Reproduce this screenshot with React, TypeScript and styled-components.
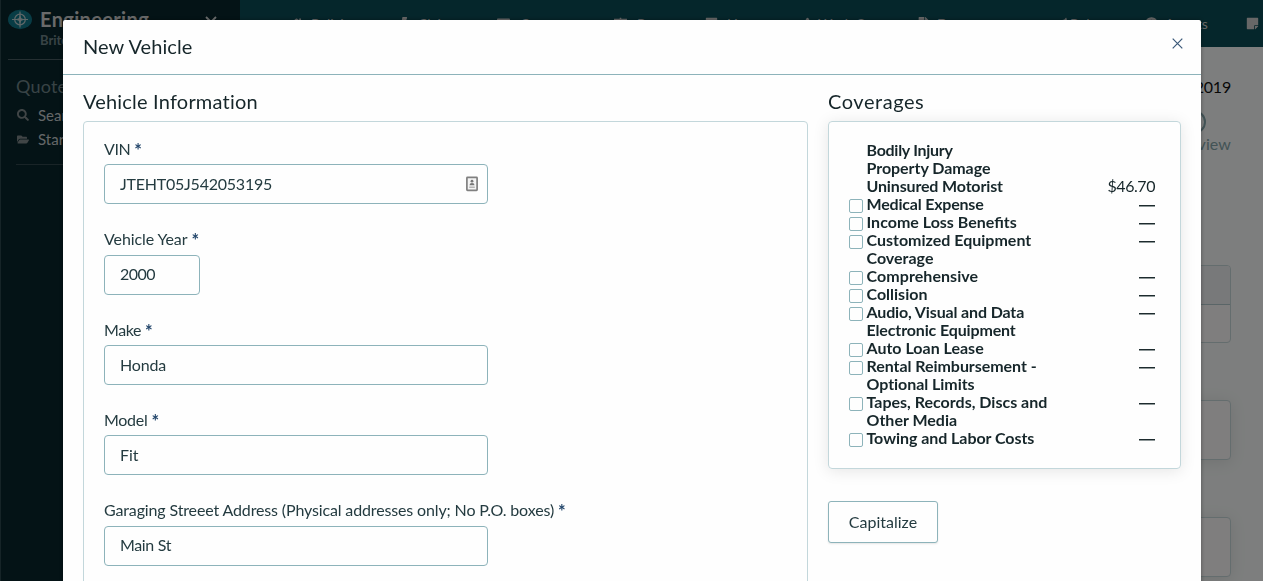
import React from "react";
import styled, { createGlobalStyle } from "styled-components";
import { FaSearch, FaFolderOpen, FaHome, FaBolt, FaAddressCard, FaStickyNote, FaFileAlt, FaLeaf, FaUserCircle, FaExclamationTriangle, FaSlidersH } from "react-icons/fa";

const GlobalStyle = createGlobalStyle`
  * { box-sizing: border-box; }
  html, body { margin: 0; height: 100%; overflow: hidden; }
  body { font-family: Lato, "Open Sans", sans-serif; font-size: 16px; color: #16262a; background: #fafdfc; }
`;

const Page = styled.div`
  display: flex;
  width: 1263px;
  height: 581px;
  overflow: hidden;
`;

const Sidebar = styled.aside`
  flex: 0 0 240px;
  background: #08262c;
  border-left: 1px solid #2c484e;
  color: #d8dcdc;
  padding: 8px 7px;
`;

const Brand = styled.div`
  display: flex;
  height: 52px;
  border-bottom: 1px solid #4a5f64;
`;

const BrandText = styled.div`
  margin: -1px 0 0 8px;
  flex: 1;
`;

const BrandName = styled.div`
  font-size: 20px;
  line-height: 24px;
  letter-spacing: 0.35px;
  font-weight: 700;
  color: #d4d4d4;
`;

const BrandOrg = styled.div`
  font-size: 13px;
  line-height: 19px;
  font-weight: 700;
  color: #71868b;
`;

const MenuArrow = styled.svg`
  margin: 8px 16px 0 0;
`;

const MenuTitle = styled.div`
  margin: 14px 0 0 8px;
  font-size: 18px;
  line-height: 24px;
  letter-spacing: 0.2px;
  color: #71868b;
`;

const MenuItem = styled.div`
  display: flex;
  align-items: center;
  gap: 9px;
  height: 24px;
  padding-left: 1px;
  font-size: 15px;
  color: #c9cfd0;
  svg { color: #808a8c; width: 12px; }
`;

const MenuList = styled.div`
  margin: 5px 0 0 8px;
  padding-bottom: 13px;
  border-bottom: 1px solid #33494e;
`;

const Main = styled.main`
  flex: 1;
  min-width: 0;
`;

const Nav = styled.nav`
  display: flex;
  height: 47px;
  padding-left: 50px;
  background: #0b4c56;
  overflow: hidden;
`;

const NavItem = styled.span<{ $w: number }>`
  display: flex;
  flex: 0 0 ${(p) => p.$w}px;
  align-items: center;
  font-size: 14px;
  color: #cfcfcf;
  white-space: nowrap;
`;

const NavIcon = styled.span<{ $w: number }>`
  display: flex;
  flex: 0 0 ${(p) => p.$w}px;
  svg { width: 13px; height: 13px; }
`;

const Content = styled.div`
  padding: 27px 32px 0 20px;
`;

const PolicyDate = styled.div`
  text-align: right;
  line-height: 26px;
  height: 27px;
  letter-spacing: -0.2px;
  color: #111;
`;

const Step = styled.div`
  display: flex;
  flex-direction: column;
  align-items: flex-end;
  height: 164px;
  padding-top: 9px;
  line-height: 19px;
  letter-spacing: 0.1px;
  color: #86a7ad;
`;

const StepDot = styled.span`
  width: 24px;
  height: 24px;
  margin-right: 25px;
  border: 2px solid #86a7ad;
  border-radius: 50%;
`;

const TableBox = styled.div`
  height: 78px;
  border: 1px solid #c9dadc;
  border-radius: 4px;
  background: #fffdfd;
  overflow: hidden;
`;

const TableHead = styled.div`
  height: 39px;
  background: #f1f2f5;
  border-bottom: 1px solid #b4cbcf;
`;

const Box = styled.div<{ $top: number }>`
  height: 60px;
  margin-top: ${(p) => p.$top}px;
  border: 1px solid #c9dadc;
  border-radius: 4px;
  background: #fffdfd;
  box-shadow: 0 2px 16px rgba(0, 0, 0, 0.1);
`;

const Overlay = styled.div`
  position: fixed;
  inset: 0;
  padding: 20px 62px 0 63px;
  background: rgba(0, 0, 0, 0.5);
`;

const Modal = styled.section`
  height: 640px;
  border-radius: 2px;
  background: #fefefe;
  box-shadow: 0 0 4px rgba(0, 0, 0, 0.35);
`;

const ModalHeader = styled.header`
  display: flex;
  justify-content: space-between;
  height: 55px;
  padding: 15px 18px 0 20px;
  border-bottom: 1px solid #8db3ba;
`;

const Heading = styled.h2<{ $ls: number }>`
  height: 24px;
  margin: 0;
  font-size: 20px;
  line-height: 22px;
  font-weight: 400;
  letter-spacing: ${(p) => p.$ls}px;
  color: #16262a;
`;

const CloseButton = styled.button`
  width: 11px;
  height: 11px;
  margin-top: 3px;
  padding: 0;
  border: 0;
  background: none;
  svg { display: block; }
`;

const ModalBody = styled.div`
  display: flex;
  gap: 20px;
  padding: 15px 20px 0;
`;

const InfoColumn = styled.div`
  width: 725px;
`;

const CoverColumn = styled.div`
  width: 353px;
`;

const FormPanel = styled.div`
  height: 560px;
  margin-top: 7px;
  padding: 17px 20px;
  border: 1px solid #c3d7db;
  border-radius: 4px;
`;

const Field = styled.div`
  height: 90.33px;
`;

const Label = styled.label<{ $ls: number }>`
  display: flex;
  height: 25.4px;
  line-height: 20px;
  letter-spacing: ${(p) => p.$ls}px;
  color: #243b40;
`;

const Star = styled.span`
  margin-left: 4px;
  font-size: 18px;
  line-height: 22px;
  font-weight: 700;
  color: #23466b;
`;

const InputBox = styled.div<{ $w: number }>`
  display: flex;
  align-items: center;
  justify-content: space-between;
  width: ${(p) => p.$w}px;
  height: 40px;
  padding: 0 9px 0 15px;
  border: 1px solid #8db3ba;
  border-radius: 4px;
`;

const Value = styled.span<{ $ls: number }>`
  padding-bottom: 2px;
  letter-spacing: ${(p) => p.$ls}px;
  color: #243b40;
`;

const CoverPanel = styled.div`
  height: 348px;
  margin-top: 7px;
  padding: 19px 25px 0 20px;
  border: 1px solid #c3d7db;
  border-radius: 4px;
  box-shadow: 0 2px 16px rgba(0, 0, 0, 0.1);
`;

const CoverRow = styled.div`
  display: flex;
  line-height: 18px;
`;

const CheckSlot = styled.span`
  flex: 0 0 17.5px;
`;

const Check = styled.span`
  display: block;
  width: 14px;
  height: 14px;
  margin-top: 4px;
  border: 1px solid #8db3ba;
  border-radius: 2px;
`;

const CoverName = styled.span<{ $ls: number }>`
  flex: 1;
  font-weight: 700;
  white-space: pre-line;
  letter-spacing: ${(p) => p.$ls}px;
`;

const Amount = styled.span`
  letter-spacing: -0.45px;
`;

const Dash = styled.span`
  width: 16px;
  height: 2px;
  margin-top: 10px;
  background: linear-gradient(#1d2b2e 50%, #8f9899 50%);
`;

const Button = styled.button`
  width: 110px;
  height: 42px;
  margin-top: 32px;
  padding: 0 0 2px;
  border: 1px solid #8db3ba;
  border-radius: 3px;
  background: #fefefe;
  box-shadow: 0 1px 2px rgba(0, 0, 0, 0.1);
  font: inherit;
  color: #243b40;
`;

const NAV = [
  { Icon: FaHome, text: "Policies", iw: 21, w: 109 },
  { Icon: FaBolt, text: "Claims", iw: 19, w: 98 },
  { Icon: FaAddressCard, text: "Contacts", iw: 23, w: 117 },
  { Icon: FaSlidersH, text: "Rates", iw: 23, w: 91 },
  { Icon: FaStickyNote, text: "Lists", iw: 22, w: 96 },
  { Icon: FaExclamationTriangle, text: "Work Queue", iw: 17, w: 116 },
  { Icon: FaFileAlt, text: "Documents", iw: 20, w: 137 },
  { Icon: FaLeaf, text: "Rules", iw: 16, w: 91 },
  { Icon: FaUserCircle, text: "Agents", iw: 20, w: 101 },
  { Icon: FaStickyNote, text: "", iw: 15, w: 15 },
];

const FIELDS = [
  { label: "VIN", value: "JTEHT05J542053195", w: 384, ls: -0.4, vls: -0.23, badge: true },
  { label: "Vehicle Year", value: "2000", w: 96, ls: -0.1, vls: -0.5 },
  { label: "Make", value: "Honda", w: 384, ls: -0.4, vls: -0.15 },
  { label: "Model", value: "Fit", w: 384, ls: -0.3, vls: -0.05 },
  { label: "Garaging Streeet Address (Physical addresses only; No P.O. boxes)", value: "Main St", w: 384, ls: -0.14, vls: -0.35 },
];

const COVERAGES: { name: string; ls: number; check?: boolean; amount?: string }[] = [
  { name: "Bodily Injury", ls: -0.28 },
  { name: "Property Damage", ls: -0.05 },
  { name: "Uninsured Motorist", ls: -0.15, amount: "$46.70" },
  { name: "Medical Expense", ls: -0.2, check: true },
  { name: "Income Loss Benefits", ls: 0, check: true },
  { name: "Customized Equipment\nCoverage", ls: 0, check: true },
  { name: "Comprehensive", ls: 0.07, check: true },
  { name: "Collision", ls: 0, check: true },
  { name: "Audio, Visual and Data\nElectronic Equipment", ls: -0.14, check: true },
  { name: "Auto Loan Lease", ls: 0, check: true },
  { name: "Rental Reimbursement -\nOptional Limits", ls: -0.05, check: true },
  { name: "Tapes, Records, Discs and\nOther Media", ls: 0, check: true },
  { name: "Towing and Labor Costs", ls: -0.05, check: true },
];

const Compass = () => (
  <svg width="24" height="24" viewBox="0 0 24 24" fill="none" stroke="#bfd0d2">
    <ellipse cx="12" cy="11.5" rx="12" ry="9.7" fill="#11788a" stroke="none" />
    <circle cx="12" cy="11.5" r="5.3" strokeWidth="1.2" />
    <path d="M12 3.5v16M4 11.5h16" strokeWidth="1.2" />
    <path d="M12 7l1.3 3.2 3.2 1.3-3.2 1.3L12 16l-1.3-3.2-3.2-1.3 3.2-1.3z" fill="#bfd0d2" stroke="none" />
  </svg>
);

const ContactBadge = () => (
  <svg width="12" height="16" viewBox="0 0 12 16">
    <rect x="0.9" y="1.4" width="10.2" height="13" rx="0.6" fill="#f4f4f4" stroke="#808080" strokeWidth="1.7" />
    <circle cx="6" cy="5.2" r="1.4" fill="#777" />
    <path d="M3.5 9.3q0-2.4 2.5-2.4t2.5 2.4z" fill="#777" />
    <path d="M3.2 11.2h5.6" stroke="#aaa" strokeWidth="1.3" />
  </svg>
);

export default function App() {
  return (
    <>
      <GlobalStyle />
      <Page>
        <Sidebar>
          <Brand>
            <Compass />
            <BrandText>
              <BrandName>Engineering</BrandName>
              <BrandOrg>BriteCore</BrandOrg>
            </BrandText>
            <MenuArrow width="12" height="8" viewBox="0 0 12 8" fill="none" stroke="#d8dcdc" strokeWidth="1.8">
              <path d="M1 1l5 5 5-5" />
            </MenuArrow>
          </Brand>
          <MenuTitle>Quotes</MenuTitle>
          <MenuList>
            <MenuItem><FaSearch size={12} />Search</MenuItem>
            <MenuItem><FaFolderOpen size={13} />Start</MenuItem>
          </MenuList>
        </Sidebar>
        <Main>
          <Nav>
            {NAV.map(({ Icon, text, iw, w }) => (
              <NavItem key={text} $w={w}><NavIcon $w={iw}><Icon /></NavIcon>{text}</NavItem>
            ))}
          </Nav>
          <Content>
            <PolicyDate>01/01/2019</PolicyDate>
            <Step><StepDot />Review</Step>
            <TableBox><TableHead /></TableBox>
            <Box $top={57} />
            <Box $top={57} />
          </Content>
        </Main>
      </Page>
      <Overlay>
        <Modal>
          <ModalHeader>
            <Heading $ls={0.08}>New Vehicle</Heading>
            <CloseButton aria-label="Close">
              <svg width="11" height="11" viewBox="0 0 11 11" stroke="#3a5878" strokeWidth="1.2">
                <path d="M0.7 0.7l9.6 9.6M10.3 0.7L0.7 10.3" />
              </svg>
            </CloseButton>
          </ModalHeader>
          <ModalBody>
            <InfoColumn>
              <Heading $ls={0.2}>Vehicle Information</Heading>
              <FormPanel>
                {FIELDS.map((f) => (
                  <Field key={f.label}>
                    <Label $ls={f.ls}>{f.label}<Star>*</Star></Label>
                    <InputBox $w={f.w}>
                      <Value $ls={f.vls}>{f.value}</Value>
                      {f.badge && <ContactBadge />}
                    </InputBox>
                  </Field>
                ))}
              </FormPanel>
            </InfoColumn>
            <CoverColumn>
              <Heading $ls={0.55}>Coverages</Heading>
              <CoverPanel>
                {COVERAGES.map((c) => (
                  <CoverRow key={c.name}>
                    <CheckSlot>{c.check && <Check />}</CheckSlot>
                    <CoverName $ls={c.ls}>{c.name}</CoverName>
                    {c.amount ? <Amount>{c.amount}</Amount> : c.check && <Dash />}
                  </CoverRow>
                ))}
              </CoverPanel>
              <Button>Capitalize</Button>
            </CoverColumn>
          </ModalBody>
        </Modal>
      </Overlay>
    </>
  );
}
